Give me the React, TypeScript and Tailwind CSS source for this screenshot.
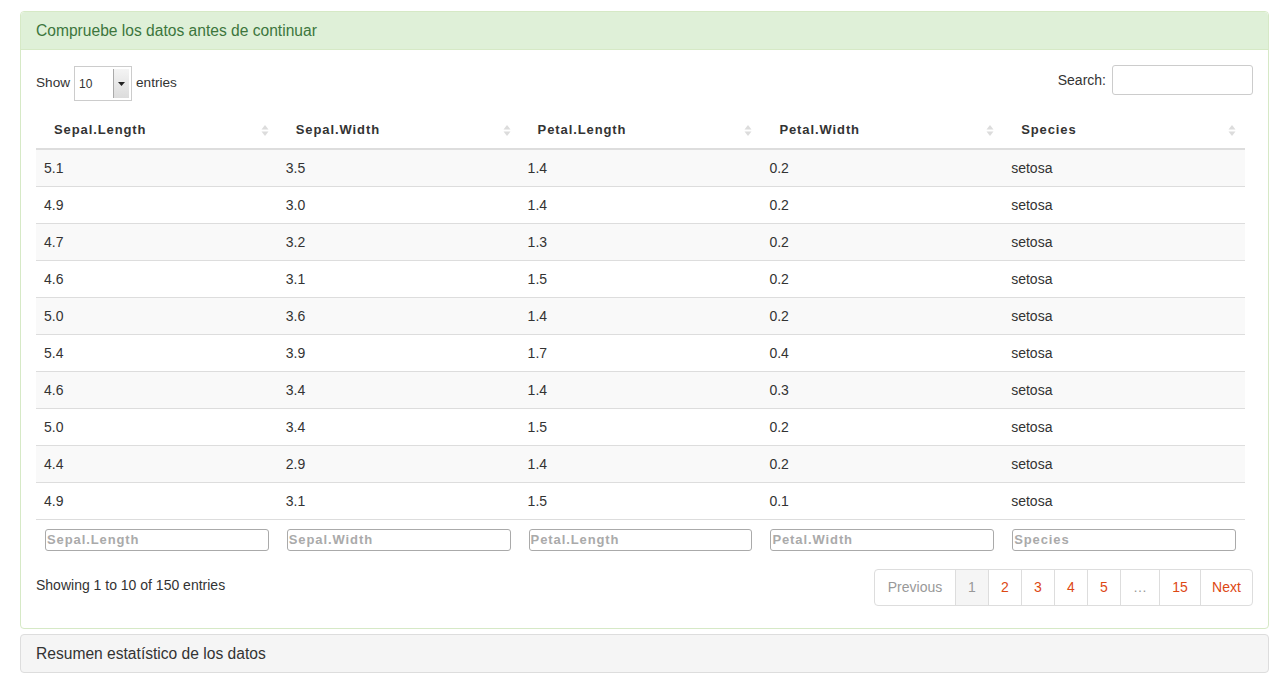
const rows = [
  ["5.1", "3.5", "1.4", "0.2", "setosa"],
  ["4.9", "3.0", "1.4", "0.2", "setosa"],
  ["4.7", "3.2", "1.3", "0.2", "setosa"],
  ["4.6", "3.1", "1.5", "0.2", "setosa"],
  ["5.0", "3.6", "1.4", "0.2", "setosa"],
  ["5.4", "3.9", "1.7", "0.4", "setosa"],
  ["4.6", "3.4", "1.4", "0.3", "setosa"],
  ["5.0", "3.4", "1.5", "0.2", "setosa"],
  ["4.4", "2.9", "1.4", "0.2", "setosa"],
  ["4.9", "3.1", "1.5", "0.1", "setosa"],
]

const cols = ["Sepal.Length", "Sepal.Width", "Petal.Length", "Petal.Width", "Species"]

const SortIcon = () => (
  <svg width="8" height="13" viewBox="0 0 8 13" className="shrink-0">
    <path d="M4 1 L7.5 5.5 H0.5 Z" fill="#dcdcdc" />
    <path d="M4 12 L7.5 7.5 H0.5 Z" fill="#dcdcdc" />
  </svg>
)

export default function App() {
  return (
    <div className="min-h-screen bg-white pl-5 pr-[1px] pt-[11px] text-[#333] text-[14px]" style={{ fontFamily: '"Liberation Sans", Arial, sans-serif' }}>
      {/* main panel */}
      <div className="rounded border border-[#d6e9c6] bg-white">
        <div className="h-[38px] flex items-center px-[15px] bg-[#dff0d8] border-b border-[#d6e9c6] text-[#3c763d] text-[15.6px] rounded-t">
          Compruebe los datos antes de continuar
        </div>
        <div className="px-[15px] pt-[15px] pb-[22px]">
          {/* top controls */}
          <div className="flex justify-between items-start">
            <div className="flex items-center gap-[4px] pt-[1px] text-[13.6px]">
              <span>Show</span>
              <div className="flex h-[35px] w-[58px] border border-[#ccc] bg-white">
                <span className="flex-1 pl-[4px] flex items-center text-[12px]">10</span>
                <span className="w-[16px] bg-gradient-to-b from-[#f4f4f4] to-[#dcdcdc] border-l border-[#aaa] m-[2px] ml-0 flex items-center justify-center">
                  <svg width="7" height="4" viewBox="0 0 7 4"><path d="M0 0 H7 L3.5 4 Z" fill="#222" /></svg>
                </span>
              </div>
              <span>entries</span>
            </div>
            <div className="flex items-center gap-[6px]">
              <span>Search:</span>
              <div className="w-[141px] h-[30px] border border-[#ccc] rounded-[3px]" />
            </div>
          </div>

          {/* table */}
          <div className="mt-[11px] w-[1209px]">
            <div className="grid grid-cols-5 h-[38px] border-b-2 border-[#ddd] font-bold text-[13px]">
              {cols.map((c) => (
                <div key={c} className="flex items-center justify-between pl-[18px] pr-[9px] tracking-[0.9px]">
                  <span>{c}</span>
                  <SortIcon />
                </div>
              ))}
            </div>
            {rows.map((r, i) => (
              <div key={i} className={`grid grid-cols-5 h-[37px] border-b border-[#ddd] ${i % 2 === 0 ? "bg-[#f9f9f9]" : "bg-white"}`}>
                {r.map((v, j) => (
                  <div key={j} className="flex items-center pl-[8px]">{v}</div>
                ))}
              </div>
            ))}
            <div className="grid grid-cols-5 h-[40px]">
              {cols.map((c) => (
                <div key={c} className="flex items-center pl-[9px] pr-[9px]">
                  <div className="w-full h-[22px] border border-[#aaa] rounded-[3px] flex items-center px-[1px] font-bold text-[13px] text-[#aaa] tracking-[0.9px] bg-white">
                    {c}
                  </div>
                </div>
              ))}
            </div>
          </div>

          {/* footer */}
          <div className="flex justify-between items-start mt-[9px]">
            <div className="pt-[6px]">Showing 1 to 10 of 150 entries</div>
            <div className="flex h-[37px] border border-[#ddd] rounded-[4px] text-[14px]">
              <span className="w-[80px] flex items-center justify-center text-[#999]">Previous</span>
              <span className="w-[33px] flex items-center justify-center border-l border-[#ddd] bg-[#f5f5f5] text-[#999]">1</span>
              {["2", "3", "4", "5"].map((n) => (
                <span key={n} className="w-[33px] flex items-center justify-center border-l border-[#ddd] text-[#dd4814]">{n}</span>
              ))}
              <span className="w-[39px] flex items-center justify-center border-l border-[#ddd] text-[#999]">…</span>
              <span className="w-[41px] flex items-center justify-center border-l border-[#ddd] text-[#dd4814]">15</span>
              <span className="w-[52px] flex items-center justify-center border-l border-[#ddd] text-[#dd4814]">Next</span>
            </div>
          </div>
        </div>
      </div>

      {/* second panel */}
      <div className="mt-[5px] rounded border border-[#ddd] bg-[#f5f5f5] h-[39px] flex items-center px-[15px] text-[15.6px]">
        Resumen estatístico de los datos
      </div>
    </div>
  )
}
